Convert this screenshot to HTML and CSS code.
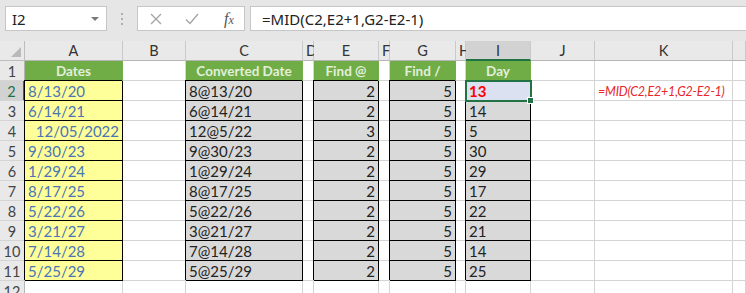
FILE: index.html
```html
<!DOCTYPE html>
<html lang="en">
<head>
  <meta charset="UTF-8">
  <title>MID formula - Day</title>
  <link rel="stylesheet" href="styles.css">
</head>
<body>
  <div class="bar">
    <div class="namebox">I2<span class="drop"></span></div>
    <div class="grip">
      <svg width="3" height="12" viewBox="0 0 3 12"><rect x="0" y="0" width="2" height="2" fill="#b0b0b0"/><rect x="0" y="5" width="2" height="2" fill="#b0b0b0"/><rect x="0" y="10" width="2" height="2" fill="#b0b0b0"/></svg>
    </div>
    <div class="fxbox">
      <svg class="cancel" width="12" height="12" viewBox="0 0 12 12"><path d="M1 1 L11 11 M11 1 L1 11" stroke="#a6a6a6" stroke-width="1.4" fill="none"/></svg>
      <svg class="enter" width="14" height="12" viewBox="0 0 14 12"><path d="M1 6.5 L5 10.5 L13 1" stroke="#a6a6a6" stroke-width="1.4" fill="none"/></svg>
      <span class="fx">f<span>x</span></span>
    </div>
    <div class="formula">=MID(C2,E2+1,G2-E2-1)</div>
  </div>

  <div class="sheet">
    <div class="corner"></div><div class="col">A</div><div class="col">B</div><div class="col">C</div><div class="col">D</div><div class="col">E</div><div class="col">F</div><div class="col">G</div><div class="col">H</div><div class="col on">I</div><div class="col">J</div><div class="col">K</div><div class="col"></div>

    <div class="rh">1</div><div class="g">Dates</div><div></div><div class="g">Converted Date</div><div></div><div class="g">Find @</div><div></div><div class="g">Find /</div><div></div><div class="g">Day</div><div></div><div></div><div></div>

    <div class="rh on">2</div><div class="y">8/13/20</div><div></div><div class="d">8@13/20</div><div></div><div class="d num">2</div><div></div><div class="d num">5</div><div></div><div class="d sel red">13</div><div></div><div class="note">=MID(C2,E2+1,G2-E2-1)</div><div></div>

    <div class="rh">3</div><div class="y">6/14/21</div><div></div><div class="d">6@14/21</div><div></div><div class="d num">2</div><div></div><div class="d num">5</div><div></div><div class="d">14</div><div></div><div></div><div></div>

    <div class="rh">4</div><div class="y num">12/05/2022</div><div></div><div class="d">12@5/22</div><div></div><div class="d num">3</div><div></div><div class="d num">5</div><div></div><div class="d">5</div><div></div><div></div><div></div>

    <div class="rh">5</div><div class="y">9/30/23</div><div></div><div class="d">9@30/23</div><div></div><div class="d num">2</div><div></div><div class="d num">5</div><div></div><div class="d">30</div><div></div><div></div><div></div>

    <div class="rh">6</div><div class="y">1/29/24</div><div></div><div class="d">1@29/24</div><div></div><div class="d num">2</div><div></div><div class="d num">5</div><div></div><div class="d">29</div><div></div><div></div><div></div>

    <div class="rh">7</div><div class="y">8/17/25</div><div></div><div class="d">8@17/25</div><div></div><div class="d num">2</div><div></div><div class="d num">5</div><div></div><div class="d">17</div><div></div><div></div><div></div>

    <div class="rh">8</div><div class="y">5/22/26</div><div></div><div class="d">5@22/26</div><div></div><div class="d num">2</div><div></div><div class="d num">5</div><div></div><div class="d">22</div><div></div><div></div><div></div>

    <div class="rh">9</div><div class="y">3/21/27</div><div></div><div class="d">3@21/27</div><div></div><div class="d num">2</div><div></div><div class="d num">5</div><div></div><div class="d">21</div><div></div><div></div><div></div>

    <div class="rh">10</div><div class="y">7/14/28</div><div></div><div class="d">7@14/28</div><div></div><div class="d num">2</div><div></div><div class="d num">5</div><div></div><div class="d">14</div><div></div><div></div><div></div>

    <div class="rh">11</div><div class="y">5/25/29</div><div></div><div class="d">5@25/29</div><div></div><div class="d num">2</div><div></div><div class="d num">5</div><div></div><div class="d">25</div><div></div><div></div><div></div>

    <div class="rh">12</div><div></div><div></div><div></div><div></div><div></div><div></div><div></div><div></div><div></div><div></div><div></div><div></div>
  </div>
</body>
</html>
```

FILE: styles.css
```css
body {
  margin: 0;
  height: 293px;
  overflow: hidden;
  background: #fff;
  font-family: Lato, "Liberation Sans", sans-serif;
}

/* formula bar */
.bar {
  height: 41px;
  box-sizing: border-box;
  padding-top: 6px;
  background: #e6e6e6;
  display: flex;
  align-items: flex-start;
}
.namebox, .fxbox, .formula {
  height: 25px;
  box-sizing: border-box;
  background: #fff;
  border: 1px solid #c6c6c6;
  display: flex;
  align-items: center;
}
.namebox {
  margin-left: 5px;
  width: 102px;
  padding-left: 6px;
  font: 15px "Noto Sans", sans-serif;
  color: #222;
}
.drop {
  margin-left: auto;
  margin-right: 7px;
  border-left: 4px solid transparent;
  border-right: 4px solid transparent;
  border-top: 4px solid #7a7a7a;
}
.grip {
  width: 30px;
  height: 25px;
  display: flex;
  align-items: center;
  justify-content: center;
}
.fxbox { width: 108px; padding-left: 12px; }
.fxbox .enter { margin-left: 23px; }
.fx {
  margin-left: 25px;
  font: italic 16px "Liberation Serif", serif;
  color: #555;
}
.fx span { font-size: 12px; }
.formula {
  flex: 1;
  margin-left: 5px;
  border-right: none;
  padding-left: 11px;
  font: 15px "Noto Sans", sans-serif;
  color: #222;
}

/* grid */
.sheet {
  display: grid;
  grid-template-columns: 25px 98px 63px 117px 11px 65px 11px 66px 10px 65px 64px 138px 13px;
  grid-auto-rows: 20px;
  font-size: 15px;
  color: #222;
}
.sheet > * {
  box-sizing: border-box;
  border-right: 1px solid #d4d4d4;
  border-bottom: 1px solid #d4d4d4;
  padding: 0 3px;
  line-height: 21px;
  white-space: nowrap;
}
.corner {
  background: #e9e9e9;
  border-color: #bdbdbd;
  display: flex;
  align-items: flex-end;
  justify-content: flex-end;
  padding: 3px;
}
.corner::after {
  content: "";
  border-left: 10px solid transparent;
  border-bottom: 10px solid #b9b9b9;
}
.col {
  background: #e9e9e9;
  border-right-color: #c9c9c9;
  border-bottom-color: #b5b5b5;
  text-align: center;
  color: #333;
  font-size: 14.5px;
  line-height: 20px;
}
.col.on {
  background: #d2d2d2;
  border-bottom: 2px solid #217346;
}
.rh {
  background: #e9e9e9;
  border-right-color: #b5b5b5;
  border-bottom-color: #d4d4d4;
  text-align: center;
  color: #444;
  font-size: 14.5px;
}
.rh.on {
  background: #d2d2d2;
  border-right: 2px solid #217346;
  color: #217346;
}
.g {
  background: #70ad47;
  border-color: #70ad47;
  color: #e2efda;
  font-weight: bold;
  font-size: 13.5px;
  text-align: center;
}
.y, .d {
  border-color: #000;
  box-shadow: -1px -1px 0 #000;
}
.y { background: #ffff99; color: #4a75b5; }
.d { background: #d9d9d9; }
.num { text-align: right; }
.red { color: #f00; font-weight: bold; }
.sel {
  position: relative;
  z-index: 1;
  background: #dbe1f1;
  outline: 2px solid #217346;
  outline-offset: -1px;
}
.sel::after {
  content: "";
  position: absolute;
  right: -4px;
  bottom: -4px;
  width: 5px;
  height: 5px;
  background: #217346;
  border: 1px solid #fff;
}
.note {
  color: #e8262a;
  font-style: italic;
  font-size: 12.5px;
  letter-spacing: -0.2px;
}
```
